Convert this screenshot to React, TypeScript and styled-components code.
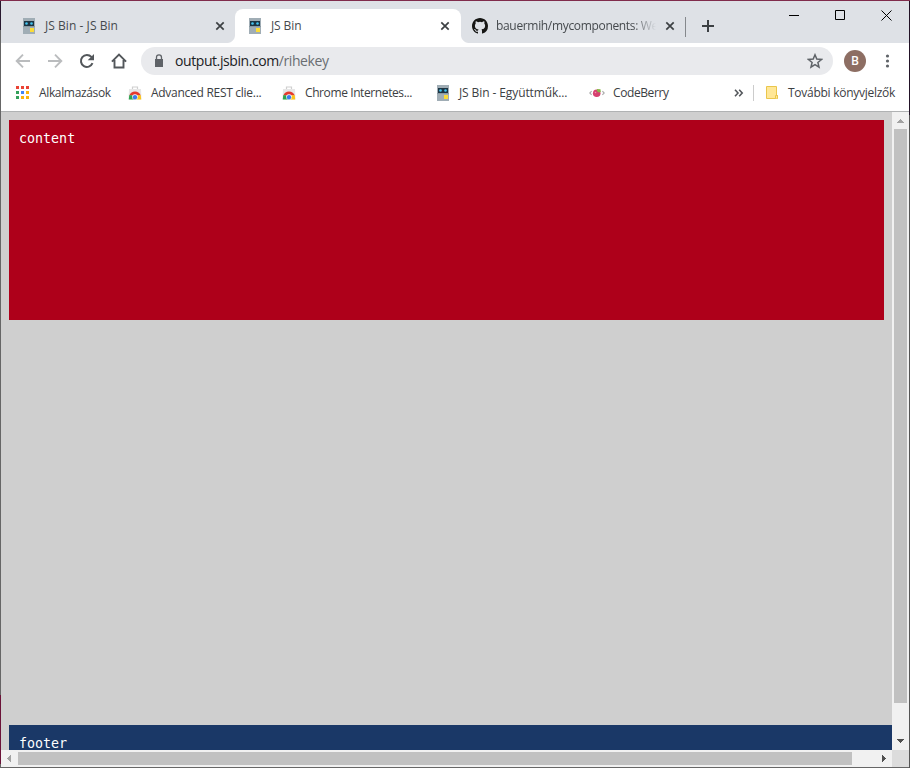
import React from "react";
import styled, { createGlobalStyle } from "styled-components";

const Global = createGlobalStyle`
  *{box-sizing:border-box}
  html,body{margin:0;padding:0;overflow:hidden}
  svg{display:block;flex:none}
`;

const Frame = styled.div`
  width: 910px;
  height: 768px;
  padding: 1px;
  background:
    linear-gradient(#802c4c, #802c4c) 0 0 / 910px 1px no-repeat,
    linear-gradient(#28182e 0 30px, #666 30px 695px, #6b1238 695px 764px, #666 764px) 0 0 / 1px 768px no-repeat,
    linear-gradient(#221226 0 115px, #555 115px) 909px 0 / 1px 768px no-repeat,
    #666;
`;
const Window = styled.div`
  display: flex;
  flex-direction: column;
  width: 908px;
  height: 766px;
  background: #fff;
  font-family: "Open Sans", "Noto Sans", sans-serif;
  font-size: 12px;
  color: #3c4043;
`;
const Label = styled.span<{ $w: number; $ls?: number; $fade?: boolean }>`
  flex: none;
  width: ${(p) => p.$w}px;
  white-space: nowrap;
  line-height: 20px;
  letter-spacing: ${(p) => p.$ls ?? 0}px;
  ${(p) => p.$fade && "mask-image: linear-gradient(90deg, #000 calc(100% - 24px), transparent);"}
`;

const TabStrip = styled.div`
  display: flex;
  height: 42px;
  padding-top: 8px;
  background: #dee1e6;
`;
const Tab = styled.div<{ $w: number; $pad: number; $active?: boolean; $edge?: "left" | "right" }>`
  display: flex;
  align-items: center;
  flex: none;
  width: ${(p) => p.$w}px;
  height: 34px;
  padding-left: ${(p) => p.$pad}px;
  color: #45494d;
  background: ${(p) =>
    p.$active
      ? "#fff"
      : p.$edge === "right"
      ? "radial-gradient(circle at 0 0, transparent 7.5px, #fff 8.5px) 100% 100% / 8px 8px no-repeat"
      : "radial-gradient(circle at 100% 0, transparent 7.5px, #fff 8.5px) 0 100% / 8px 8px no-repeat"};
  border-radius: ${(p) => (p.$active ? "8px 8px 0 0" : "0")};
`;
const TabTitle = styled.div<{ $w: number }>`
  display: flex;
  width: ${(p) => p.$w}px;
  padding-left: 8px;
  flex: none;
`;
const TabDivider = styled.div`
  width: 1px;
  height: 20px;
  margin-top: 8px;
  background: #85888c;
`;
const NewTab = styled.div`
  margin: 10px 0 0 15px;
`;
const WindowControls = styled.div`
  display: flex;
  gap: 36px;
  margin-left: 74px;
`;

const Toolbar = styled.div`
  display: flex;
  align-items: center;
  height: 37px;
  padding: 0 0 1px 14px;
`;
const NavIcons = styled.div`
  display: flex;
  gap: 16px;
  width: 126px;
`;
const Omnibox = styled.div`
  display: flex;
  align-items: center;
  width: 692px;
  height: 28px;
  padding: 0 10px 0 12px;
  border-radius: 14px;
  background: #e9eaed;
  font-size: 14px;
  color: #202124;
`;
const Muted = styled.span`
  color: #6a6e72;
`;
const Url = styled.div`
  flex: 1;
  padding-left: 10px;
  white-space: nowrap;
`;
const Avatar = styled.div`
  width: 22px;
  height: 22px;
  margin: 0 11px;
  border-radius: 50%;
  background: #8d6e63;
  color: #fff;
  font: 600 12px/22px "Open Sans", sans-serif;
  text-align: center;
`;

const Bookmarks = styled.div`
  display: flex;
  align-items: center;
  height: 31px;
  padding: 0 0 5px 14px;
`;
const Bookmark = styled.div<{ $w: number; $gap?: number }>`
  display: flex;
  align-items: center;
  gap: ${(p) => p.$gap ?? 8}px;
  width: ${(p) => p.$w}px;
  flex: none;
`;
const Divider = styled.div`
  width: 1px;
  height: 16px;
  margin: 0 11px 0 9px;
  background: #ccc;
`;

const Viewport = styled.div`
  display: grid;
  grid-template: 638px 17px / 891px 17px;
  height: 656px;
  border-top: 1px solid #b0b2b3;
`;
const Page = styled.div`
  display: flex;
  flex-direction: column;
  justify-content: space-between;
  padding: 8px 0 0 8px;
  overflow: hidden;
  background: #cfcfcf;
  font: 13.333px/16px "DejaVu Sans Mono", monospace;
  color: #fff;
`;
const ContentBox = styled.div`
  width: 875px;
  height: 200px;
  padding: 11px 10px;
  background: #ae001a;
`;
const FooterBox = styled.div`
  height: 25px;
  padding: 11px 10px 0;
  background: #1a3867;
`;
const VBar = styled.div`
  display: flex;
  flex-direction: column;
  justify-content: space-between;
  align-items: center;
  background: #f1f1f1;
`;
const HBar = styled.div`
  display: flex;
  justify-content: space-between;
  align-items: center;
  background: #f1f1f1;
`;
const Thumb = styled.div<{ $w: number; $h: number; $mr?: number; $mb?: number }>`
  width: ${(p) => p.$w}px;
  height: ${(p) => p.$h}px;
  margin: 0 ${(p) => p.$mr ?? 0}px ${(p) => p.$mb ?? 0}px 0;
  background: #c1c1c1;
`;
const Corner = styled.div`
  background: #dcdcdc;
`;

const Arrow = ({ d, dark }: { d: string; dark?: boolean }) => (
  <svg width="17" height="17" shapeRendering="crispEdges">
    <path d={d} fill={dark ? "#505050" : "#a3a3a3"} />
  </svg>
);
const Bot = () => (
  <svg width="16" height="16" viewBox="0 0 16 16">
    <path d="M2 0h12v16H2z" fill="#a0adb5" />
    <path d="M2 8h12v1H2z" fill="#8999a2" />
    <path d="M3 3h10v5H3z" fill="#1d3442" />
    <circle cx="5.5" cy="5.5" r="1.3" fill="#43c5f2" />
    <circle cx="10.5" cy="5.5" r="1.3" fill="#43c5f2" />
    <path d="M9 10h4v4H9z" fill="#fbdc38" />
  </svg>
);
const Close = () => (
  <svg width="10" height="10" viewBox="0 0 10 10">
    <path d="M1.3 1.3 8.7 8.7M8.7 1.3 1.3 8.7" stroke="#3c4043" strokeWidth="1.7" />
  </svg>
);
const Github = () => (
  <svg width="16" height="16" viewBox="0 0 16 16">
    <path
      fill="#161614"
      d="M8 0C3.58 0 0 3.58 0 8c0 3.54 2.29 6.53 5.47 7.59.4.07.55-.17.55-.38 0-.19-.01-.82-.01-1.49-2.01.37-2.53-.49-2.69-.94-.09-.23-.48-.94-.82-1.13-.28-.15-.68-.52-.01-.53.63-.01 1.08.58 1.23.82.72 1.21 1.87.87 2.33.66.07-.52.28-.87.51-1.07-1.78-.2-3.64-.89-3.64-3.95 0-.87.31-1.59.82-2.15-.08-.2-.36-1.02.08-2.12 0 0 .67-.21 2.2.82a7.4 7.4 0 0 1 4 0c1.53-1.04 2.2-.82 2.2-.82.44 1.1.16 1.92.08 2.12.51.56.82 1.27.82 2.15 0 3.07-1.87 3.75-3.65 3.95.29.25.54.73.54 1.48 0 1.07-.01 1.93-.01 2.2 0 .21.15.46.55.38A8.01 8.01 0 0 0 16 8c0-4.42-3.58-8-8-8z"
    />
  </svg>
);
const Back = ({ flip }: { flip?: boolean }) => (
  <svg width="16" height="16" viewBox="0 0 16 16">
    <path
      d={flip ? "M1 8h13M8 1.7 14.3 8 8 14.3" : "M15 8H2M8 1.7 1.7 8 8 14.3"}
      fill="none"
      stroke="#babcbe"
      strokeWidth="1.9"
    />
  </svg>
);
const Reload = () => (
  <svg width="16" height="16" viewBox="0 0 16 16">
    <path d="M13.5 10.2A6 6 0 1 1 12.4 3.9L14 5.5" fill="none" stroke="#53575b" strokeWidth="2" />
    <path d="M15 1v6.3H8.7z" fill="#53575b" />
  </svg>
);
const Home = () => (
  <svg width="16" height="16" viewBox="0 0 16 16">
    <path d="M.9 8.7 8 1.6l7.1 7.1M3.5 7v7.5h9V7" fill="none" stroke="#53575b" strokeWidth="1.9" />
  </svg>
);
const Lock = () => (
  <svg width="12" height="14" viewBox="0 0 12 14">
    <path d="M2 5h8v8H2z" fill="#5f6368" />
    <path d="M3.5 5.5V3.4a2.5 2.5 0 0 1 5 0v2.1" fill="none" stroke="#5f6368" strokeWidth="1.3" />
  </svg>
);
const Star = () => (
  <svg width="16" height="16" viewBox="0 0 16 16">
    <path
      d="m8 1.8 1.8 4.3 4.7.4-3.6 3 1.1 4.6L8 11.6l-4 2.5 1.1-4.6-3.6-3 4.7-.4z"
      fill="none"
      stroke="#5f6368"
      strokeWidth="1.5"
    />
  </svg>
);
const Dots = () => (
  <svg width="20" height="16" viewBox="0 0 20 16">
    {[3, 8, 13].map((y) => (
      <circle key={y} cx="10.500" cy={y} r="1.6" fill="#5f6368" />
    ))}
  </svg>
);
const appColors = ["#ea4335", "#ea4335", "#ea4335", "#34a05a", "#4285f4", "#fbb30b", "#34a05a", "#fbb30b", "#fbb30b"];
const Apps = () => (
  <svg width="16" height="16" viewBox="0 0 16 16" shapeRendering="crispEdges">
    {appColors.map((c, i) => (
      <rect key={i} x={1 + (i % 3) * 5} y={1 + Math.floor(i / 3) * 5} width="3" height="3" fill={c} />
    ))}
  </svg>
);
const Store = () => (
  <svg width="16" height="16" viewBox="0 0 16 16">
    <path d="M5.5 4V2h5v2" fill="none" stroke="#cfcfcf" strokeWidth="1.2" />
    <path d="M2 4h12l.5 10.5h-13z" fill="#e6e6e6" />
    <path d="M2.200 10.500Q4 6.500 8 6.500t5.800 4z" fill="#e53a2e" />
    <path d="M2.200 10.200h3L8 14.500H1.800z" fill="#2ea551" />
    <path d="M10.500 10.200h3.300l.400 4.300H8z" fill="#fbc51b" />
    <circle cx="8" cy="12" r="2.800" fill="#fff" />
    <circle cx="8" cy="12.200" r="2.200" fill="#3b7ded" />
  </svg>
);
const Berry = () => (
  <svg width="16" height="16" viewBox="0 0 16 16">
    <path d="M2.6 6.2.8 8l1.8 1.8M13.4 6.2 15.2 8l-1.8 1.8" fill="none" stroke="#aaa" strokeWidth="1.1" />
    <circle cx="7.700" cy="8.300" r="3.800" fill="#d5416f" />
    <path d="m8 4 3.500.300.300 2.700-2 .500-2-1.500z" fill="#87b849" />
    <circle cx="6.500" cy="7.500" r=".8" fill="#ee91ab" />
  </svg>
);
const Folder = () => (
  <svg width="14" height="16" viewBox="0 0 14 16">
    <path d="M1.500 1.500h10v9h1v3h-11z" fill="#ffe797" stroke="#eac64c" />
    <path d="M10.500 13.500v-3h2v3" fill="#ffe797" stroke="#eac64c" />
  </svg>
);
const Chevrons = () => (
  <svg width="10" height="8" viewBox="0 0 10 8">
    <path d="m1 .8 3 3.200-3 3.200M5.200.8l3 3.200-3 3.200" fill="none" stroke="#53575b" strokeWidth="1.600" />
  </svg>
);

export default function App() {
  return (
    <Frame>
      <Global />
      <Window>
        <TabStrip>
          <Tab $w={234} $pad={20} $edge="right">
            <Bot />
            <TabTitle $w={178}><Label $w={160} $ls={0.05}>JS Bin - JS Bin</Label></TabTitle>
            <Close />
          </Tab>
          <Tab $w={226} $pad={12} $active>
            <Bot />
            <TabTitle $w={177}><Label $w={150} $ls={-0.1}>JS Bin</Label></TabTitle>
            <Close />
          </Tab>
          <Tab $w={224} $pad={11} $edge="left">
            <Github />
            <TabTitle $w={177}><Label $w={160} $ls={-0.33} $fade>bauermih/mycomponents: We</Label></TabTitle>
            <Close />
          </Tab>
          <TabDivider />
          <NewTab>
            <svg width="14" height="14"><path d="M1 7h12M7 1v12" stroke="#3c4043" strokeWidth="2" /></svg>
          </NewTab>
          <WindowControls>
            <svg width="10" height="12" shapeRendering="crispEdges"><path d="M0 6h10v1H0z" /></svg>
            <svg width="10" height="12"><path d="M.5 1.500h9v9h-9z" fill="none" stroke="#000" /></svg>
            <svg width="11" height="12"><path d="m.5 1.500 10 10M10.500 1.500l-10 10" stroke="#000" /></svg>
          </WindowControls>
        </TabStrip>
        <Toolbar>
          <NavIcons><Back /><Back flip /><Reload /><Home /></NavIcons>
          <Omnibox>
            <Lock />
            <Url><Label $w={160} $ls={-0.42}>output.jsbin.com<Muted>/rihekey</Muted></Label></Url>
            <Star />
          </Omnibox>
          <Avatar>B</Avatar>
          <Dots />
        </Toolbar>
        <Bookmarks>
          <Bookmark $w={112}><Apps /><Label $w={85} $ls={-0.35}>Alkalmazások</Label></Bookmark>
          <Bookmark $w={154}><Store /><Label $w={120} $ls={-0.28}>Advanced REST clie...</Label></Bookmark>
          <Bookmark $w={154}><Store /><Label $w={120} $ls={-0.4}>Chrome Internetes...</Label></Bookmark>
          <Bookmark $w={154}><Bot /><Label $w={120} $ls={-0.1}>JS Bin - Együttműk...</Label></Bookmark>
          <Bookmark $w={145}><Berry /><Label $w={80} $ls={-0.4}>CodeBerry</Label></Bookmark>
          <Chevrons />
          <Divider />
          <Bookmark $w={140} $gap={9}><Folder /><Label $w={120} $ls={-0.27}>További könyvjelzők</Label></Bookmark>
        </Bookmarks>
        <Viewport>
          <Page>
            <ContentBox>content</ContentBox>
            <FooterBox>footer</FooterBox>
          </Page>
          <VBar>
            <Arrow d="M8 7h1v1h1v1h1v1h1v1H5v-1h1V9h1V8h1z" />
            <Thumb $w={13} $h={574} $mb={30} />
            <Arrow dark d="M5 6h7v1h-1v1h-1v1H9v1H8V9H7V8H6V7H5z" />
          </VBar>
          <HBar>
            <Arrow d="M10 5v7H9v-1H8v-1H7V9H6V8h1V7h1V6h1V5z" />
            <Thumb $w={834} $h={13} $mr={23} />
            <Arrow dark d="M7 5v7h1v-1h1v-1h1V9h1V8h-1V7H9V6H8V5z" />
          </HBar>
          <Corner />
        </Viewport>
      </Window>
    </Frame>
  );
}
